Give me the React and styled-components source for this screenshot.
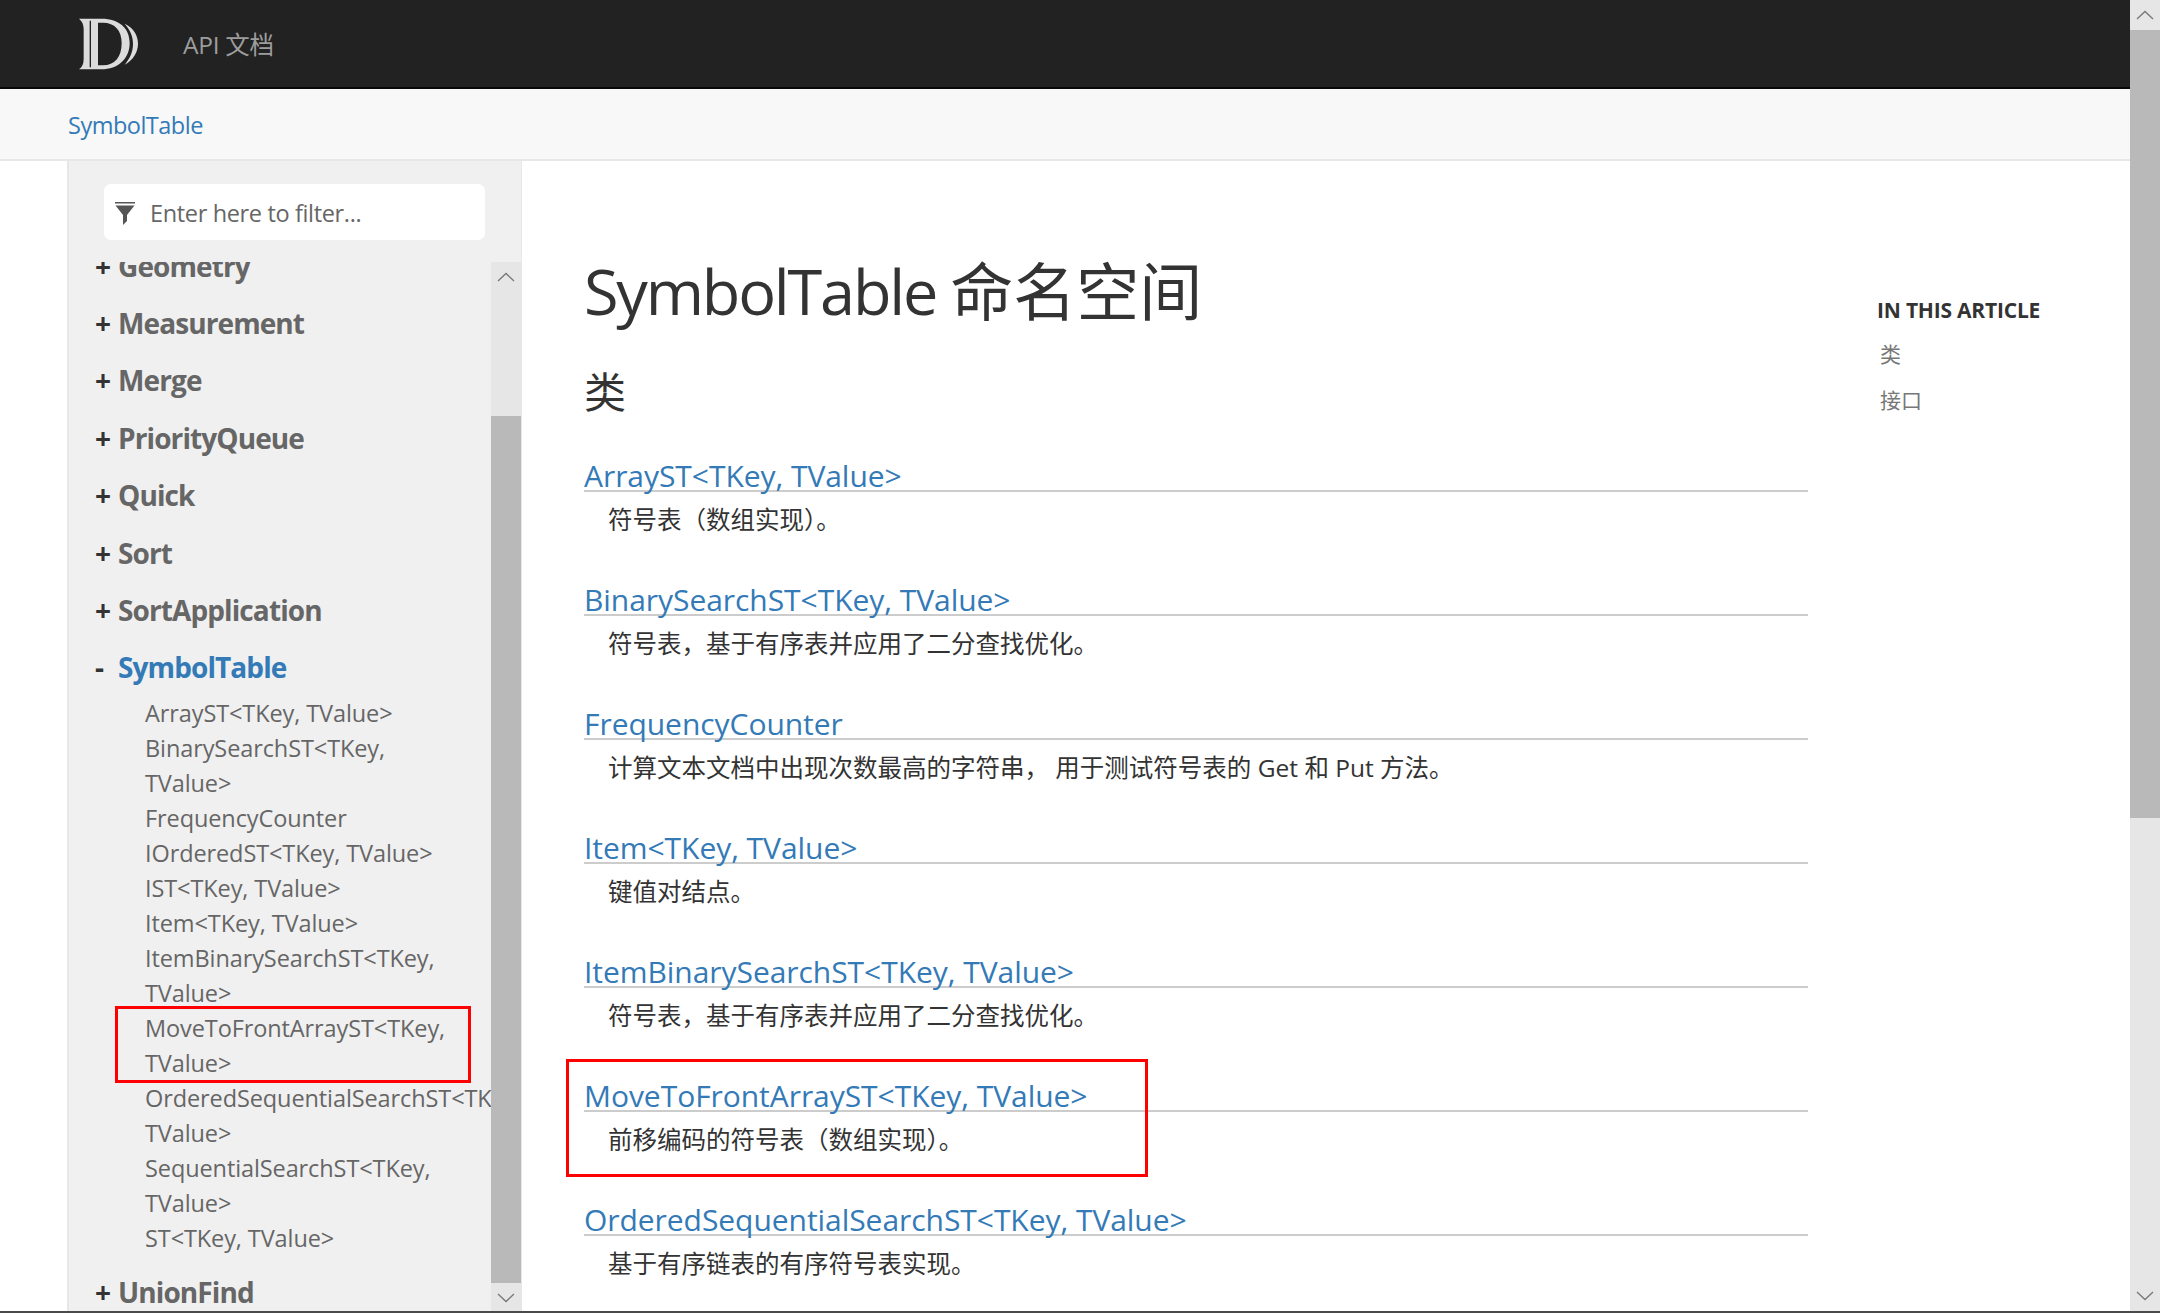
import React from "react";
import styled, { createGlobalStyle } from "styled-components";

const FONT = `"Open Sans", "Noto Sans CJK SC", sans-serif`;

const GlobalStyle = createGlobalStyle`
  html, body {
    margin: 0;
    padding: 0;
    height: 100%;
    overflow: hidden;
    background: #fff;
    font-family: ${FONT};
  }
`;

const Page = styled.div`
  display: flex;
  height: 1311px;
  border-bottom: 2px solid #4a4a4a;
  overflow: hidden;
`;

const Viewport = styled.div`
  flex: 1;
  min-width: 0;
  display: flex;
  flex-direction: column;
`;

const TopBar = styled.header`
  height: 87px;
  flex: none;
  display: flex;
  align-items: center;
  background: #222;
  border-bottom: 2px solid #080808;
`;

const LogoWrap = styled.div`
  margin-left: 79px;
  width: 60px;
  height: 52px;
`;

const Brand = styled.span`
  margin-left: 44px;
  font-size: 24.5px;
  letter-spacing: -0.3px;
  color: #9d9d9d;
`;

const Crumbs = styled.nav`
  height: 70px;
  flex: none;
  display: flex;
  align-items: center;
  padding-left: 68px;
  background: #f8f8f8;
  border-bottom: 2px solid #e7e7e7;
`;

const Link = styled.a`
  color: #337ab7;
  text-decoration: none;
`;

const CrumbLink = styled(Link)`
  margin-top: 2px;
  font-size: 23.5px;
  letter-spacing: -0.5px;
`;

const Body = styled.div`
  flex: 1;
  min-height: 0;
  display: flex;
  padding-left: 67px;
`;

const Sidebar = styled.aside`
  width: 455px;
  flex: none;
  display: flex;
  flex-direction: column;
  background: #f0f0f0;
  border-left: 2px solid #e7e7e7;
  border-right: 1px solid #e7e7e7;
  box-sizing: border-box;
`;

const FilterZone = styled.div`
  height: 101px;
  flex: none;
  padding: 23px 0 0 35px;
  box-sizing: border-box;
`;

const Filter = styled.div`
  width: 381px;
  height: 56px;
  display: flex;
  align-items: center;
  box-sizing: border-box;
  padding-left: 11px;
  background: #fff;
  border-radius: 7px;
  color: #666;
  font-size: 23.5px;
  letter-spacing: -0.35px;
`;

const FilterLabel = styled.span`
  margin-left: 15px;
  margin-top: 2px;
`;

const TreeRow = styled.div`
  flex: 1;
  min-height: 0;
  display: flex;
`;

const Tree = styled.div`
  flex: 1;
  min-width: 0;
  overflow: hidden;
`;

const TreeInner = styled.ul`
  list-style: none;
  margin: -25px 0 0;
  padding: 0 0 0 26px;
`;

const Section = styled.li`
  display: flex;
  align-items: center;
  height: 57.4px;
  font-size: 28px;
  font-weight: 700;
  letter-spacing: -0.9px;
  color: ${(p) => (p.$active ? "#337ab7" : "#666")};
`;

const Toggle = styled.span`
  width: 23px;
  flex: none;
  color: #333;
`;

const Leaves = styled.ul`
  list-style: none;
  margin: 0 0 7px;
  padding: 0 36px 0 50px;
  font-size: 23.5px;
  line-height: 35px;
  letter-spacing: -0.1px;
  color: #666;
`;

const Leaf = styled.li`
  position: relative;
  ${(p) =>
    p.$marked &&
    `&::after {
      content: "";
      position: absolute;
      left: -30px;
      width: 356px;
      top: -5px;
      bottom: -2px;
      border: 3px solid #f00;
      box-sizing: border-box;
    }`}
`;

const Rail = styled.div`
  width: 30px;
  flex: none;
  display: flex;
  flex-direction: column;
  background: #e6e6e6;
`;

const RailButton = styled.div`
  height: 30px;
  flex: none;
  display: flex;
  align-items: center;
  justify-content: center;
`;

const Thumb = styled.div`
  flex: none;
  height: ${(p) => p.$height}px;
  margin-top: ${(p) => p.$top}px;
  background: #b9b9b9;
`;

const RailSpacer = styled.div`
  flex: 1;
`;

const Article = styled.main`
  width: 1224px;
  flex: none;
  margin-left: 62px;
  color: #333;
`;

const Title = styled.h1`
  margin: 92px 0 0;
  font-size: 63px;
  font-weight: 400;
  line-height: 76px;
  letter-spacing: -2.2px;
`;

const TitleCjk = styled.span`
  letter-spacing: 0;
`;

const SectionTitle = styled.h2`
  margin: 33px 0 0;
  font-size: 42px;
  font-weight: 400;
  line-height: 60px;
`;

const Entry = styled.div`
  position: relative;
  height: 124px;
  ${(p) =>
    p.$marked &&
    `&::after {
      content: "";
      position: absolute;
      left: -18px;
      width: 582px;
      top: -11px;
      height: 118px;
      border: 3px solid #f00;
      box-sizing: border-box;
    }`}
`;

const EntryList = styled.div`
  margin-top: 28px;
`;

const EntryHead = styled.div`
  height: 40px;
  border-bottom: 2px solid #ccc;
  font-size: 30px;
  line-height: 52px;
  letter-spacing: -0.05px;
`;

const EntryText = styled.p`
  margin: 0;
  padding: 10px 0 0 24px;
  font-size: 24.5px;
  line-height: 36px;
`;

const Affix = styled.div`
  margin-left: 69px;
  margin-top: 134px;
  color: #333;
`;

const AffixTitle = styled.h5`
  margin: 0 0 6px;
  font-size: 21px;
  font-weight: 700;
  line-height: 30px;
  letter-spacing: -0.2px;
  white-space: nowrap;
`;

const AffixItem = styled.div`
  margin-left: 3px;
  font-size: 21px;
  line-height: 46px;
  color: #777;
`;

const FunnelWrap = styled.span`
  display: flex;
  margin-top: 3px;
`;

const Logo = () => (
  <svg width="60" height="52" viewBox="28 28 180 156">
    <path
      fill="#dcdcdc"
      fillRule="evenodd"
      d="M28 30 H95 C150 30 180 60 180 103 C180 150 145 182 95 182 H28 C38 175 42 165 42 150 V62 C42 48 38 38 28 30 Z M85 42 V170 H100 C135 170 156 145 156 103 C156 65 135 42 100 42 Z M60 36 V176 H64 V36 Z"
    />
    <path
      fill="#dcdcdc"
      d="M165 45 C192 58 205 80 205 105 C205 130 190 155 165 168 C180 150 190 130 190 105 C190 82 180 62 165 45 Z"
    />
  </svg>
);

const FunnelIcon = () => (
  <FunnelWrap>
    <svg width="20" height="23" viewBox="0 0 20 23">
      <rect x="0" y="0" width="20" height="1.5" fill="#555" />
      <path d="M0.5 3.5 H19.5 L12 13 V19 L8 23 V13 Z" fill="#555" />
    </svg>
  </FunnelWrap>
);

const ChevronUp = () => (
  <svg width="18" height="10" viewBox="0 0 18 10">
    <path d="M1 9 L9 1.5 L17 9" fill="none" stroke="#777" strokeWidth="1.3" />
  </svg>
);

const ChevronDown = () => (
  <svg width="18" height="10" viewBox="0 0 18 10">
    <path d="M1 1 L9 8.5 L17 1" fill="none" stroke="#777" strokeWidth="1.3" />
  </svg>
);

const leaves = [
  "ArrayST<TKey, TValue>",
  "BinarySearchST<TKey, TValue>",
  "FrequencyCounter",
  "IOrderedST<TKey, TValue>",
  "IST<TKey, TValue>",
  "Item<TKey, TValue>",
  "ItemBinarySearchST<TKey, TValue>",
  "MoveToFrontArrayST<TKey, TValue>",
  "OrderedSequentialSearchST<TKey, TValue>",
  "SequentialSearchST<TKey, TValue>",
  "ST<TKey, TValue>",
];

const entries = [
  ["ArrayST<TKey, TValue>", "符号表（数组实现）。"],
  ["BinarySearchST<TKey, TValue>", "符号表，基于有序表并应用了二分查找优化。"],
  ["FrequencyCounter", "计算文本文档中出现次数最高的字符串， 用于测试符号表的 Get 和 Put 方法。"],
  ["Item<TKey, TValue>", "键值对结点。"],
  ["ItemBinarySearchST<TKey, TValue>", "符号表，基于有序表并应用了二分查找优化。"],
  ["MoveToFrontArrayST<TKey, TValue>", "前移编码的符号表（数组实现）。"],
  ["OrderedSequentialSearchST<TKey, TValue>", "基于有序链表的有序符号表实现。"],
];

export default function App() {
  return (
    <>
      <GlobalStyle />
      <Page>
        <Viewport>
          <TopBar>
            <LogoWrap>
              <Logo />
            </LogoWrap>
            <Brand>API 文档</Brand>
          </TopBar>
          <Crumbs>
            <CrumbLink href="#">SymbolTable</CrumbLink>
          </Crumbs>
          <Body>
            <Sidebar>
              <FilterZone>
                <Filter>
                  <FunnelIcon />
                  <FilterLabel>Enter here to filter...</FilterLabel>
                </Filter>
              </FilterZone>
              <TreeRow>
                <Tree>
                  <TreeInner>
                    {["Geometry", "Measurement", "Merge", "PriorityQueue", "Quick", "Sort", "SortApplication"].map((s) => (
                      <Section key={s}>
                        <Toggle>+</Toggle>
                        {s}
                      </Section>
                    ))}
                    <Section $active>
                      <Toggle>-</Toggle>
                      SymbolTable
                    </Section>
                    <Leaves>
                      {leaves.map((l) => (
                        <Leaf key={l} $marked={l.startsWith("MoveToFront")}>
                          {l}
                        </Leaf>
                      ))}
                    </Leaves>
                    <Section>
                      <Toggle>+</Toggle>
                      UnionFind
                    </Section>
                  </TreeInner>
                </Tree>
                <Rail>
                  <RailButton>
                    <ChevronUp />
                  </RailButton>
                  <Thumb $top={124} $height={867} />
                  <RailSpacer />
                  <RailButton>
                    <ChevronDown />
                  </RailButton>
                </Rail>
              </TreeRow>
            </Sidebar>
            <Article>
              <Title>
                SymbolTable <TitleCjk>命名空间</TitleCjk>
              </Title>
              <SectionTitle>类</SectionTitle>
              <EntryList>
                {entries.map(([name, text]) => (
                  <Entry key={name} $marked={name.startsWith("MoveToFront")}>
                    <EntryHead>
                      <Link href="#">{name}</Link>
                    </EntryHead>
                    <EntryText>{text}</EntryText>
                  </Entry>
                ))}
              </EntryList>
            </Article>
            <Affix>
              <AffixTitle>IN THIS ARTICLE</AffixTitle>
              <AffixItem>类</AffixItem>
              <AffixItem>接口</AffixItem>
            </Affix>
          </Body>
        </Viewport>
        <Rail>
          <RailButton>
            <ChevronUp />
          </RailButton>
          <Thumb $top={0} $height={788} />
          <RailSpacer />
          <RailButton>
            <ChevronDown />
          </RailButton>
        </Rail>
      </Page>
    </>
  );
}
